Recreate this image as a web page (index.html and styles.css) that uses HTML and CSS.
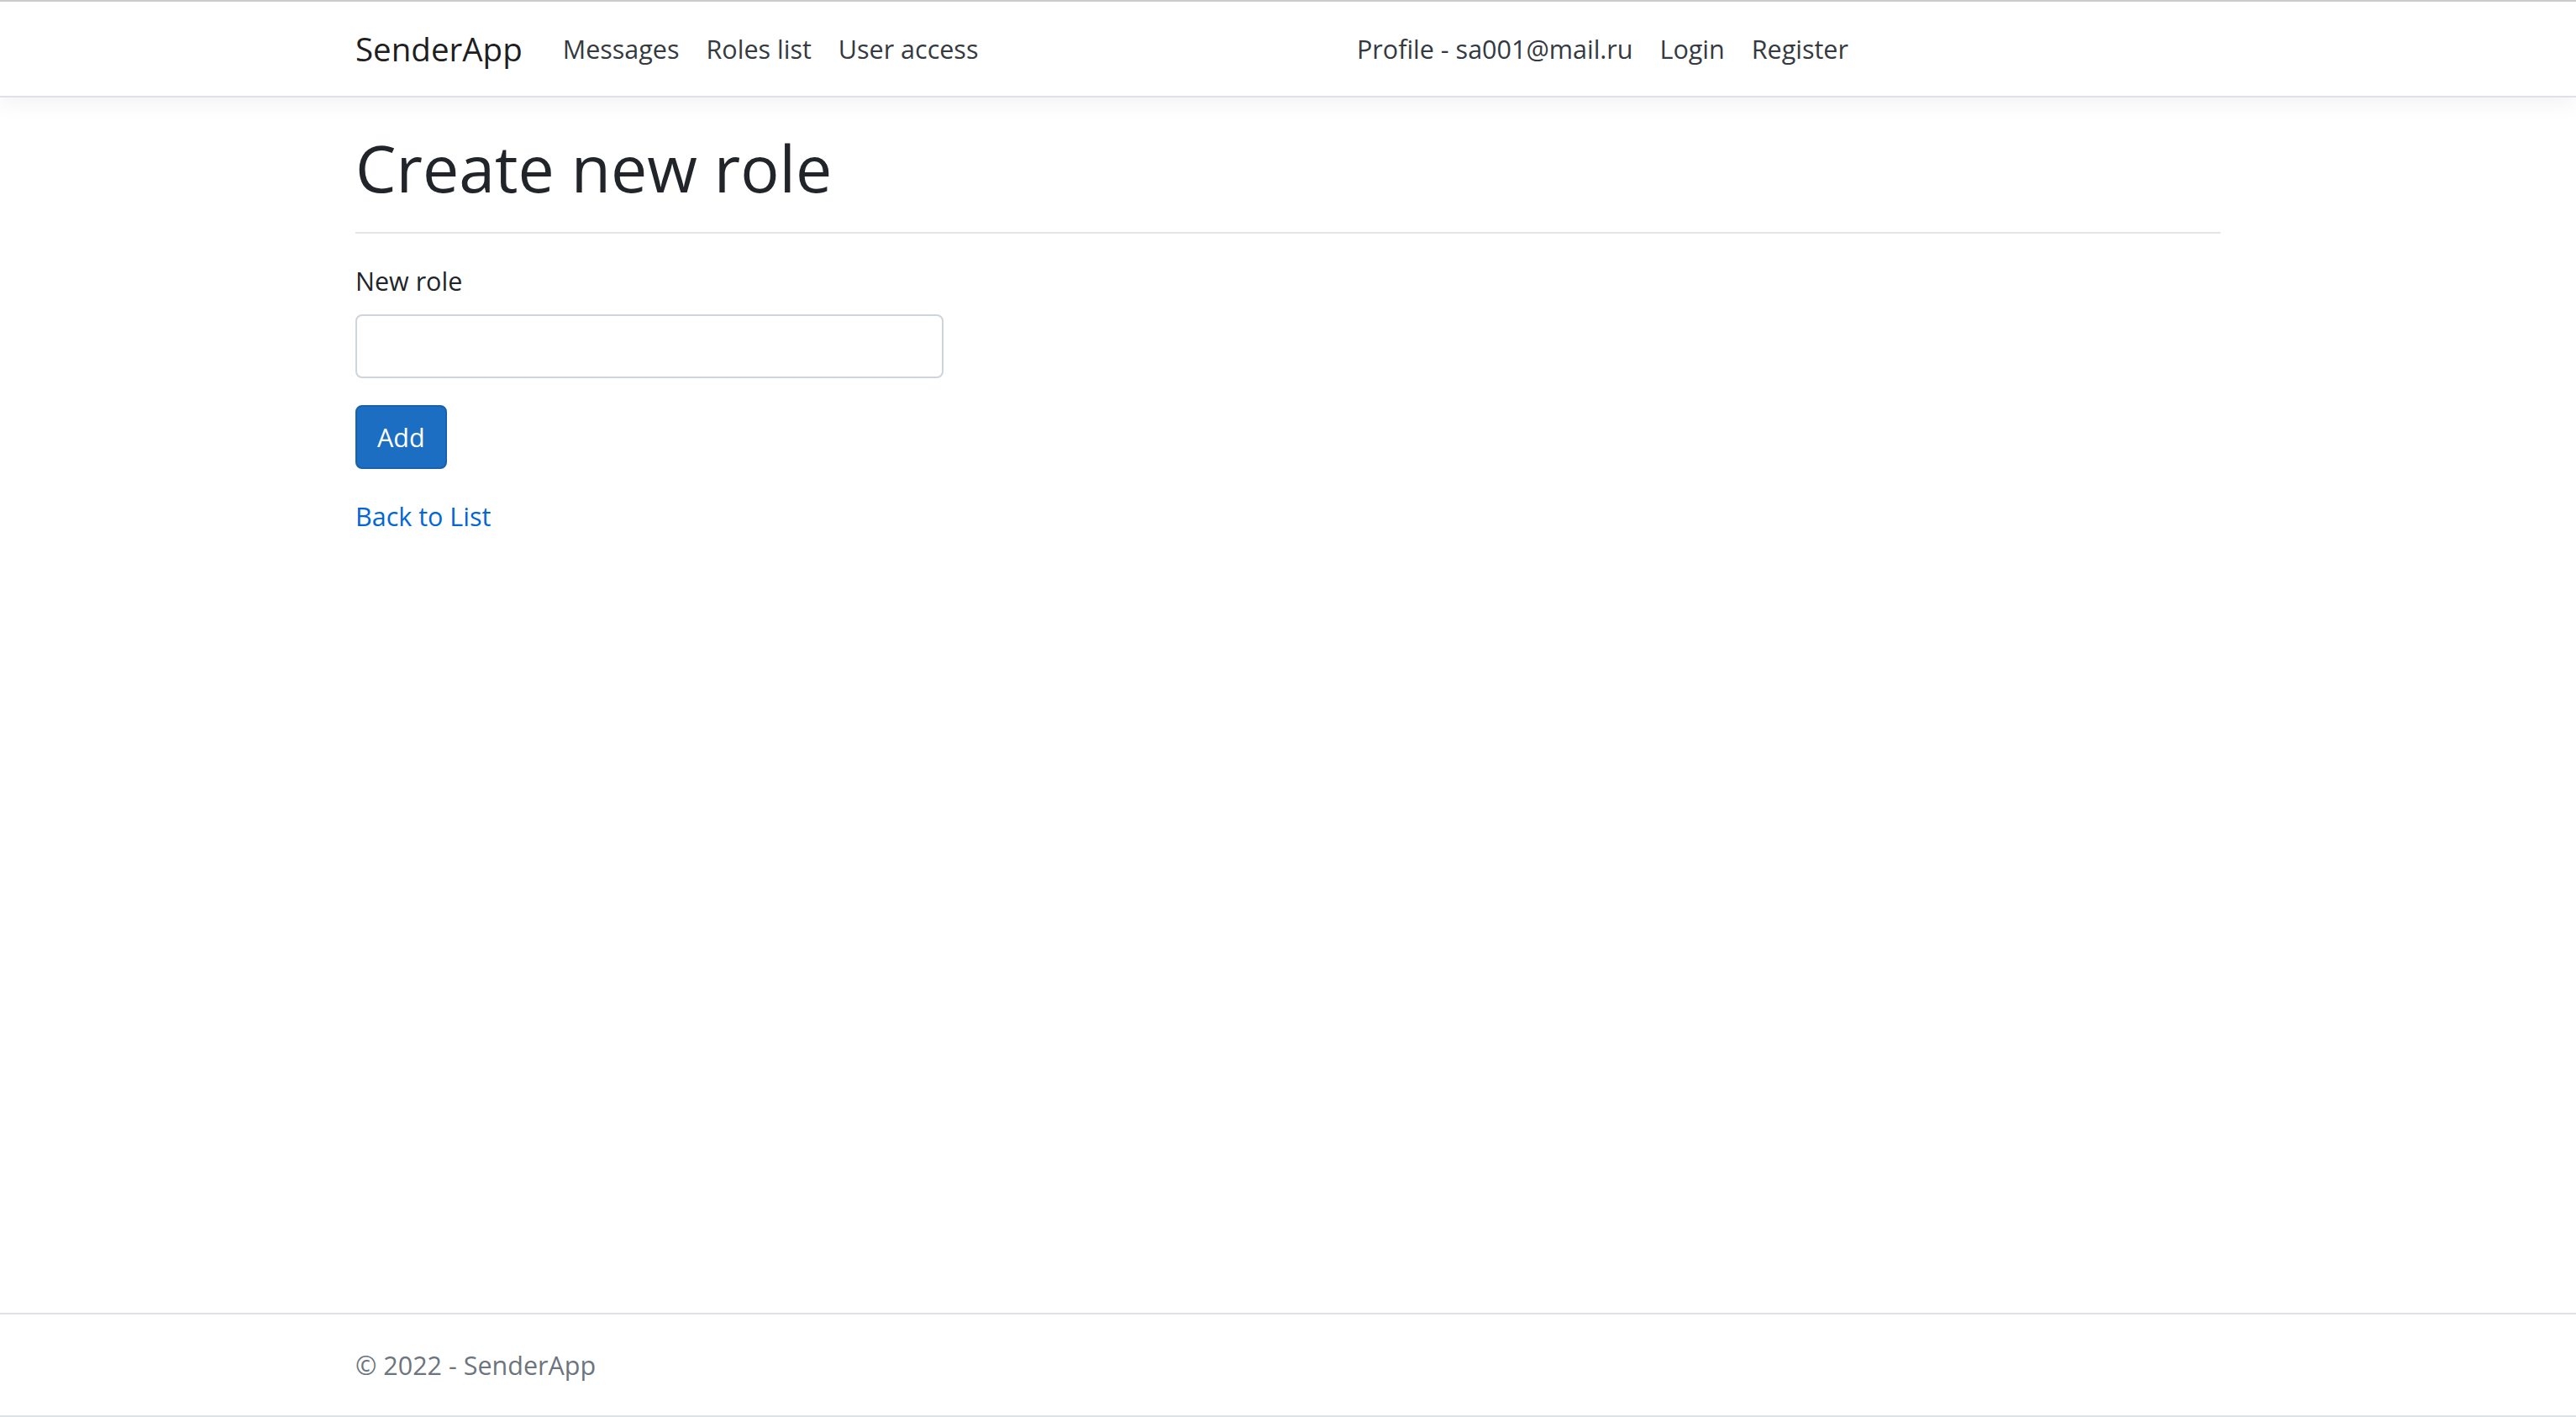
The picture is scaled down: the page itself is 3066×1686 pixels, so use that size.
FILE: index.html
```html
<!DOCTYPE html>
<html lang="en">
<head>
<meta charset="utf-8">
<title>Create new role - SenderApp</title>
<link rel="stylesheet" href="styles.css">
</head>
<body>
<header class="site-header">
  <nav class="navbar">
    <div class="container nav-inner">
      <div class="nav-left">
        <a class="brand" href="#">SenderApp</a>
        <ul class="nav-list">
          <li><a class="nav-link" href="#">Messages</a></li>
          <li><a class="nav-link" href="#">Roles list</a></li>
          <li><a class="nav-link" href="#">User access</a></li>
        </ul>
      </div>
      <ul class="nav-list">
        <li><a class="nav-link" href="#">Profile - sa001@mail.ru</a></li>
        <li><a class="nav-link" href="#">Login</a></li>
        <li><a class="nav-link" href="#">Register</a></li>
      </ul>
    </div>
  </nav>
</header>
<main class="main container">
  <h1 class="title">Create new role</h1>
  <hr class="divider">
  <div class="form-col">
    <form>
      <div class="form-group">
        <label class="label" for="role">New role</label>
        <input class="input" id="role" type="text">
      </div>
      <div class="form-group">
        <button class="btn" type="button">Add</button>
      </div>
    </form>
  </div>
  <div class="back"><a class="link" href="#">Back to List</a></div>
</main>
<footer class="footer">
  <div class="container">© 2022 - SenderApp</div>
</footer>
</body>
</html>
```
FILE: styles.css
```css
* { box-sizing: border-box; }
html, body { height: 100%; }
body {
  margin: 0;
  min-height: 100vh;
  display: flex;
  flex-direction: column;
  font-family: "Open Sans", "Noto Sans", sans-serif;
  font-size: 30.5px;
  line-height: 48px;
  color: #212529;
  background: #fff;
  border-top: 2px solid #cbcbcb;
  border-bottom: 2px solid #dbe3e6;
}
a { text-decoration: none; }
.container {
  width: 100%;
  max-width: 2280px;
  margin: 0 auto;
  padding: 0 30px;
}
.site-header { position: relative; z-index: 2; }
.navbar {
  background: #fff;
  padding: 16px 32px;
  border-bottom: 2px solid #dee2e6;
  box-shadow: 0 8px 24px rgba(0, 0, 0, 0.05);
}
.nav-inner { display: flex; align-items: center; }
.nav-left { display: flex; align-items: center; width: 1176px; flex: none; }
.brand {
  font-size: 38.5px;
  line-height: 60px;
  padding: 10px 0;
  margin-right: 32px;
  color: rgba(0, 0, 0, 0.9);
  white-space: nowrap;
}
.nav-list {
  display: flex;
  list-style: none;
  margin: 0;
  padding: 0;
}
.nav-link {
  display: block;
  padding: 16px;
  color: #343a40;
  white-space: nowrap;
}
.main { flex: 1; padding-top: 32px; padding-bottom: 32px; }
.title {
  margin: 0 0 12px;
  padding-top: 4px;
  font-size: 77px;
  line-height: 96px;
  font-weight: 500;
}
.divider {
  margin: 28px 0 32px;
  border: 0;
  border-top: 2px solid rgba(0, 0, 0, 0.1);
  height: 0;
}
.form-col { width: 700px; }
.form-group { margin-bottom: 32px; }
.label { display: block; margin-bottom: 16px; }
.input {
  display: block;
  width: 100%;
  height: 76px;
  padding: 12px 24px;
  border: 2px solid #ced4da;
  border-radius: 8px;
  font: inherit;
  color: #495057;
  background: #fff;
}
.btn {
  display: inline-block;
  height: 76px;
  padding: 0 24px;
  border: 2px solid #1861ac;
  border-radius: 8px;
  background: #1b6ec2;
  color: #fff;
  font: inherit;
  line-height: 72px;
}
.link { color: #0366d6; }
.footer {
  border-top: 2px solid #dee2e6;
  line-height: 120px;
  color: #6c757d;
  white-space: nowrap;
}
```
